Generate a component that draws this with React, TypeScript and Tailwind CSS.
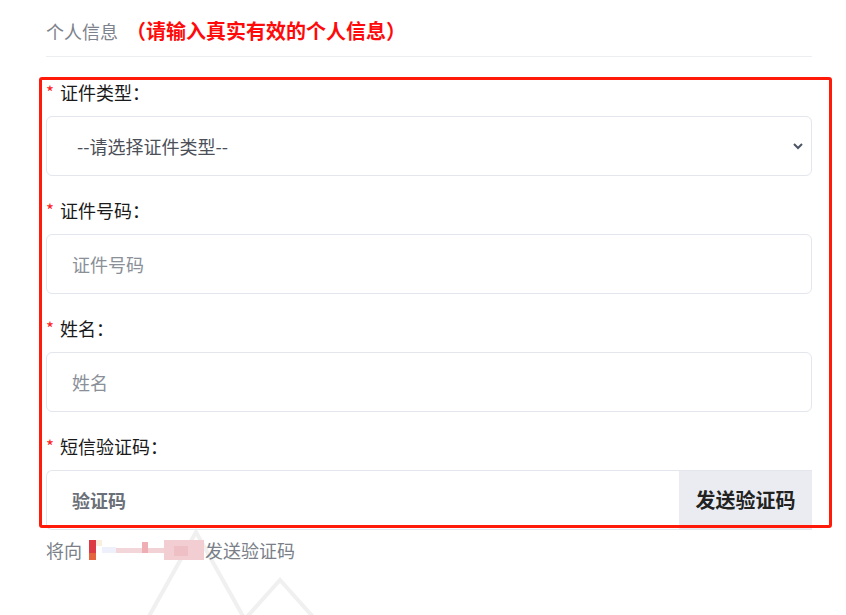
import React from "react";

const font = { fontFamily: '"Noto Sans CJK SC", "Noto Sans", sans-serif' };

function Label({ text }: { text: string }) {
  return (
    <div className="flex h-[24px] items-center text-[18px] leading-[24px] text-[#1a1a1a]">
      <span className="inline-block w-[14px] self-start pt-[2px] text-[17px] leading-[20px] text-[#ff2020]">*</span>
      <span>{text}：</span>
    </div>
  );
}

export default function App() {
  return (
    <div className="relative h-[615px] w-[846px] overflow-hidden bg-white" style={font}>
      {/* watermark */}
      <svg className="absolute left-0 top-0" width="846" height="615" viewBox="0 0 846 615">
        <g stroke="#f0f0f0" strokeWidth="4" fill="none" strokeLinejoin="miter">
          <polyline points="148,618 196,532 244,618" />
          <polyline points="246,618 280,580 314,618" />
        </g>
      </svg>

      <div className="relative ml-[46px] w-[766px]">
        <div className="flex h-[28px] items-center mt-[17px] mb-[11px]">
          <span className="text-[18px] text-[#7d828c]">个人信息</span>
          <span className="ml-[8px] text-[20px] font-bold text-[#ff0a0a]">（请输入真实有效的个人信息）</span>
        </div>
        <div className="h-px bg-[#eceef2]" />

        <div className="mt-[23px]">
          <Label text="证件类型" />
          <div className="mt-[12px] flex h-[60px] items-center justify-between rounded-[6px] border border-[#e3e6ec] pl-[30px] pr-[7px]">
            <span className="text-[18px] text-[#4b5058]">--请选择证件类型--</span>
            <svg width="12" height="8" viewBox="0 0 12 8">
              <polyline points="2,2 6,6 10,2" fill="none" stroke="#4b5563" strokeWidth="2" />
            </svg>
          </div>
        </div>

        <div className="mt-[22px]">
          <Label text="证件号码" />
          <div className="mt-[12px] flex h-[60px] items-center rounded-[6px] border border-[#e3e6ec] pl-[25px]">
            <span className="text-[18px] text-[#8a8f98]">证件号码</span>
          </div>
        </div>

        <div className="mt-[22px]">
          <Label text="姓名" />
          <div className="mt-[12px] flex h-[60px] items-center rounded-[6px] border border-[#e3e6ec] pl-[25px]">
            <span className="text-[18px] text-[#8a8f98]">姓名</span>
          </div>
        </div>

        <div className="mt-[22px]">
          <Label text="短信验证码" />
          <div className="mt-[12px] flex h-[60px] overflow-hidden rounded-l-[6px] border-y border-l border-[#e3e6ec]">
            <div className="flex flex-1 items-center pl-[25px]">
              <span className="text-[18px] font-bold text-[#6b6f78]">验证码</span>
            </div>
            <div className="-my-px flex w-[133px] items-center justify-center bg-[#eaecf1]">
              <span className="text-[20px] font-bold text-[#222]">发送验证码</span>
            </div>
          </div>
        </div>

        <div className="mt-[8px] flex h-[24px] items-center text-[18px] text-[#7a7f88]">
          <span>将向</span>
          <span className="relative ml-[6px] inline-block h-[20px] w-[117px]">
            <span className="absolute left-[1px] top-[0px] h-[14px] w-[7px] bg-[#dc3a44]" />
            <span className="absolute left-[1px] top-[13px] h-[7px] w-[7px] bg-[#e4643e]" />
            <span className="absolute left-[8px] top-[0px] h-[6px] w-[6px] bg-[#fbeedd]" />
            <span className="absolute left-[14px] top-[7px] h-[6px] w-[14px] bg-[#eef0fb]" />
            <span className="absolute left-[28px] top-[8px] h-[5px] w-[26px] bg-[#f3d6da]" />
            <span className="absolute left-[54px] top-[2px] h-[11px] w-[6px] bg-[#eeaeb4]" />
            <span className="absolute left-[60px] top-[8px] h-[5px] w-[16px] bg-[#f3d2d6]" />
            <span className="absolute left-[76px] top-[0px] h-[20px] w-[40px] bg-[#f2cdd1]" />
            <span className="absolute left-[86px] top-[6px] h-[10px] w-[14px] bg-[#eec0c6]" />
          </span>
          <span>发送验证码</span>
        </div>
      </div>

      {/* red annotation box */}
      <div className="pointer-events-none absolute left-[39px] top-[77px] h-[451px] w-[793px] rounded-[3px] border-[3px] border-[#ff1a0a]" />
    </div>
  );
}
